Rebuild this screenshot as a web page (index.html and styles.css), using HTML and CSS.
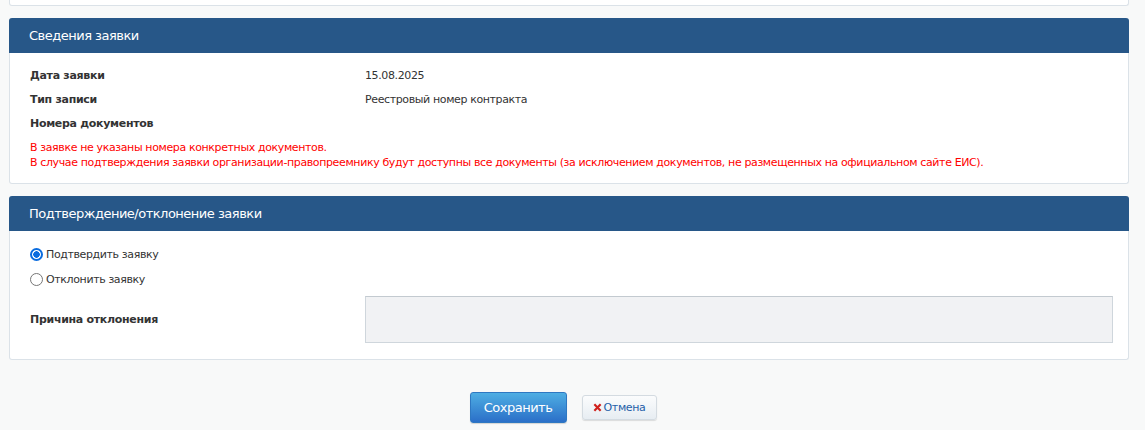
FILE: index.html
```html
<!DOCTYPE html>
<html lang="ru">
<head>
<meta charset="utf-8">
<link rel="stylesheet" href="styles.css">
</head>
<body>
<div class="page">
  <div class="card stub"></div>

  <div class="card">
    <div class="card-head">Сведения заявки</div>
    <div class="card-body info">
      <div class="row"><div class="label">Дата заявки</div><div class="value">15.08.2025</div></div>
      <div class="row"><div class="label">Тип записи</div><div class="value">Реестровый номер контракта</div></div>
      <div class="row"><div class="label">Номера документов</div><div class="value"></div></div>
      <div class="warn">
        <div>В заявке не указаны номера конкретных документов.</div>
        <div>В случае подтверждения заявки организации-правопреемнику будут доступны все документы (за исключением документов, не размещенных на официальном сайте ЕИС).</div>
      </div>
    </div>
  </div>

  <div class="card">
    <div class="card-head">Подтверждение/отклонение заявки</div>
    <div class="card-body decide">
      <label class="radio"><span class="dot on"></span>Подтвердить заявку</label>
      <label class="radio"><span class="dot"></span>Отклонить заявку</label>
      <div class="reason">
        <div class="label">Причина отклонения</div>
        <div class="area"></div>
      </div>
    </div>
  </div>

  <div class="actions">
    <button class="btn-save">Сохранить</button>
    <button class="btn-cancel"><svg class="x" viewBox="0 0 10 10" width="9" height="9"><path d="M1.5 1.5 L8.5 8.5 M8.5 1.5 L1.5 8.5" stroke="#d0201c" stroke-width="2.4" stroke-linecap="butt"/></svg>Отмена</button>
  </div>
</div>
</body>
</html>
```

FILE: styles.css
```css
html, body {
  margin: 0;
  padding: 0;
}
body {
  background: #f8f9f9;
  font-family: "DejaVu Sans", Verdana, sans-serif;
  font-size: 11px;
  letter-spacing: -0.38px;
  color: #333333;
  width: 1145px;
  height: 430px;
  overflow: hidden;
}
.page {
  padding-left: 9px;
  width: 1120px;
}
.card {
  background: #ffffff;
  border: 1px solid #dbe2e8;
  border-top: none;
  border-radius: 3px;
  margin-top: 12px;
}
.card.stub {
  margin-top: 0;
  height: 5px;
  border-radius: 0 0 3px 3px;
}
.card-head {
  background: #275788;
  color: #ffffff;
  height: 35px;
  line-height: 35px;
  padding-left: 20px;
  font-size: 13px;
  letter-spacing: -0.5px;
  margin: 0 -1px;
  border-radius: 3px 3px 0 0;
}
.card-body {
  padding: 0 20px;
}
.info {
  padding-top: 10px;
  padding-bottom: 13px;
}
.row {
  display: flex;
  height: 24px;
  align-items: center;
}
.label {
  width: 335px;
  font-weight: bold;
  letter-spacing: -0.3px;
  color: #333333;
}
.value {
  color: #333333;
}
.warn {
  color: #ff0000;
  line-height: 15px;
  padding-top: 5px;
}
.decide {
  padding-top: 11px;
  padding-bottom: 16px;
}
.radio {
  display: flex;
  align-items: center;
  height: 25px;
  color: #333333;
}
.dot {
  box-sizing: border-box;
  width: 13px;
  height: 13px;
  border-radius: 50%;
  border: 1px solid #767676;
  margin-right: 3px;
  background: #fff;
}
.dot.on {
  border: 2px solid #0a6cdf;
  background: radial-gradient(circle, #0a6cdf 0 3px, #ffffff 3.5px);
}
.reason {
  display: flex;
  align-items: center;
  margin-top: 4px;
}
.area {
  flex: 1;
  height: 45px;
  background: #f1f2f4;
  border: 1px solid #cfd6dc;
  border-top-color: #c3cad0;
  margin-right: -5px;
}
.actions {
  display: flex;
  justify-content: center;
  align-items: center;
  gap: 15px;
  margin-top: 32px;
  padding-right: 12px;
}
.btn-save {
  width: 97px;
  height: 31px;
  border: 1px solid #2e78c2;
  border-radius: 3px;
  background: linear-gradient(#4eaee3, #2b6fc8);
  color: #ffffff;
  font-family: "DejaVu Sans", Verdana, sans-serif;
  font-size: 13px;
  letter-spacing: -0.5px;
  padding: 0;
  box-shadow: 0 1px 1px rgba(0,0,0,0.15);
}
.btn-cancel {
  display: flex;
  align-items: center;
  justify-content: center;
  width: 75px;
  height: 25px;
  border: 1px solid #d4dbe1;
  border-radius: 3px;
  background: linear-gradient(#fbfcfd, #e7edf2);
  color: #1f5fa8;
  font-family: "DejaVu Sans", Verdana, sans-serif;
  font-size: 11px;
  letter-spacing: -0.38px;
  padding: 0;
  box-shadow: 0 1px 1px rgba(0,0,0,0.12);
}
.x {
  margin-right: 2px;
}
```
